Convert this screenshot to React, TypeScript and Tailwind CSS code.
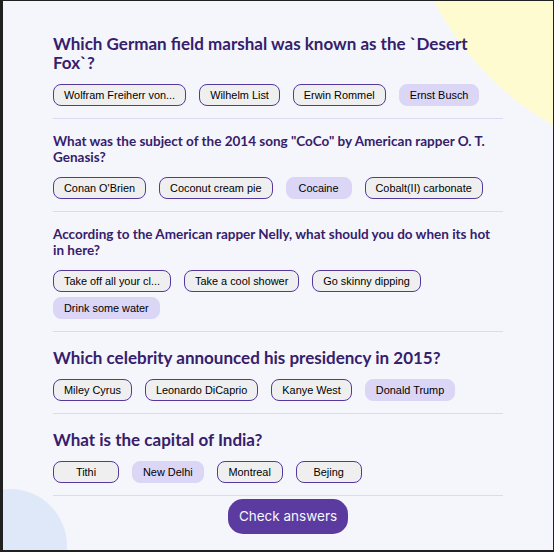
import { useState } from "react"

type Question = {
    question: string
    answers: string[]
    selected: number
}

const questions: Question[] = [
    {
        question: "Which German field marshal was known as the `Desert Fox`?",
        answers: ["Wolfram Freiherr von Richthofen", "Wilhelm List", "Erwin Rommel", "Ernst Busch"],
        selected: 3,
    },
    {
        question: 'What was the subject of the 2014 song "CoCo" by American rapper O. T. Genasis?',
        answers: ["Conan O'Brien", "Coconut cream pie", "Cocaine", "Cobalt(II) carbonate"],
        selected: 2,
    },
    {
        question: "According to the American rapper Nelly, what should you do when its hot in here?",
        answers: ["Take off all your clothes", "Take a cool shower", "Go skinny dipping", "Drink some water"],
        selected: 3,
    },
    {
        question: "Which celebrity announced his presidency in 2015?",
        answers: ["Miley Cyrus", "Leonardo DiCaprio", "Kanye West", "Donald Trump"],
        selected: 3,
    },
    {
        question: "What is the capital of India?",
        answers: ["Tithi", "New Delhi", "Montreal", "Bejing"],
        selected: 1,
    },
]

const shorten = (text: string) => (text.length > 20 ? text.slice(0, 20) + "..." : text)

const QuestionBlock = ({ q, first }: { q: Question; first: boolean }) => {
    const [selected, setSelected] = useState(q.selected)
    const small = q.question.length > 60

    return (
        <div className={first ? "" : small ? "pt-[15px]" : "pt-[16px]"}>
            <h2
                className={`font-['Lato',sans-serif] font-bold text-[#35206b] mb-[12px] ${
                    small ? "text-[13.5px] leading-[15.5px]" : "text-[17px] leading-[19px]"
                }`}
            >
                {q.question}
            </h2>
            <div className="flex flex-wrap gap-x-[13px] gap-y-[5px]">
                {q.answers.map((answer, i) => (
                    <button
                        key={answer}
                        onClick={() => setSelected(i)}
                        className={`h-[22px] min-w-[66px] px-[10px] rounded-[8px] border font-['Liberation_Sans',Arial,sans-serif] text-[10.9px] text-black flex items-center justify-center ${
                            i === selected
                                ? "bg-[#dcd6f6] border-[#dcd6f6]"
                                : "bg-[#efefef] border-[#5438a0]"
                        }`}
                    >
                        {shorten(answer)}
                    </button>
                ))}
            </div>
            <div className="mt-[12px] border-b border-[#dcdaf2]" />
        </div>
    )
}

export default function App() {
    return (
        <div className="bg-[#202020] pt-[1px] pl-[3px] pr-[1px] pb-[2px] h-[552px] w-[554px]">
            <main className="relative overflow-hidden bg-[#f5f6fc] h-full w-full">
                <div className="absolute left-[398px] top-[-437px] w-[600px] h-[600px] rounded-full bg-[#fffbd0]" />
                <div className="absolute left-[-50px] top-[488px] w-[114px] h-[114px] rounded-full bg-[#dfe8f8]" />

                <div className="relative w-[450px] mx-auto pt-[33px]">
                    {questions.map((q, i) => (
                        <QuestionBlock key={i} q={q} first={i === 0} />
                    ))}
                    <div className="flex justify-center pl-[20px] mt-[3px]">
                        <button className="h-[35px] px-[11px] rounded-[15px] bg-[#5b3b9f] text-[#f5f7fb] font-['Inter',sans-serif] text-[13.5px]">
                            Check answers
                        </button>
                    </div>
                </div>
            </main>
        </div>
    )
}
